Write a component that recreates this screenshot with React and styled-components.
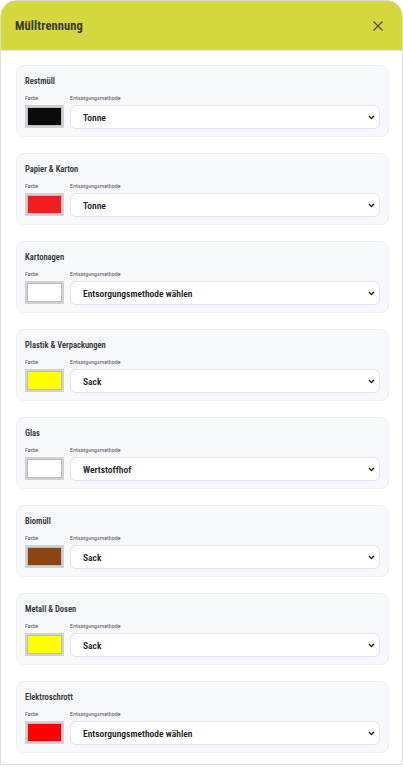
import React from "react";
import styled, { createGlobalStyle } from "styled-components";

const GlobalStyle = createGlobalStyle`
  html, body { margin: 0; padding: 0; background: #ffffff; }
  body { font-family: "Roboto Condensed", "Roboto", "Liberation Sans", sans-serif; font-stretch: condensed; }
  * { box-sizing: border-box; }
`;

const items = [
  { name: "Restmüll", color: "#0a0a0a", method: "Tonne" },
  { name: "Papier & Karton", color: "#f01e23", method: "Tonne" },
  { name: "Kartonagen", color: "#ffffff", method: "Entsorgungsmethode wählen" },
  { name: "Plastik & Verpackungen", color: "#ffff00", method: "Sack" },
  { name: "Glas", color: "#ffffff", method: "Wertstoffhof" },
  { name: "Biomüll", color: "#8b4513", method: "Sack" },
  { name: "Metall & Dosen", color: "#ffff00", method: "Sack" },
  { name: "Elektroschrott", color: "#ff0000", method: "Entsorgungsmethode wählen" },
];

const methods = ["Entsorgungsmethode wählen", "Tonne", "Sack", "Wertstoffhof"];

function App() {
  return (
    <>
      <GlobalStyle />
      <Modal>
        <Header>
          <Title>Mülltrennung</Title>
          <Close aria-label="Schließen">
            <svg width="12" height="12" viewBox="0 0 12 12">
              <path d="M1.5 1.5 L10.5 10.5 M10.5 1.5 L1.5 10.5" stroke="#4a4a3a" strokeWidth="1.1" fill="none" />
            </svg>
          </Close>
        </Header>
        <Body>
          {items.map((it) => (
            <Card key={it.name}>
              <CardTitle>{it.name}</CardTitle>
              <Row>
                <Field>
                  <Label>Farbe</Label>
                  <Swatch $color={it.color} />
                </Field>
                <Field $grow>
                  <Label>Entsorgungsmethode</Label>
                  <SelectBox>
                    <Select defaultValue={it.method}>
                      {methods.map((m) => (
                        <option key={m}>{m}</option>
                      ))}
                    </Select>
                    <Chevron width="7" height="5" viewBox="0 0 7 5">
                      <path d="M1 1 L3.5 3.5 L6 1" stroke="#222" strokeWidth="1.4" fill="none" />
                    </Chevron>
                  </SelectBox>
                </Field>
              </Row>
            </Card>
          ))}
        </Body>
      </Modal>
    </>
  );
}

export default App;

const Modal = styled.div`
  width: 403px;
  height: 765px;
  background: #ffffff;
  border: 1px solid #dcdcdc;
  border-radius: 16px 16px 0 0;
  overflow: hidden;
  display: flex;
  flex-direction: column;
`;

const Header = styled.div`
  height: 50px;
  flex-shrink: 0;
  background: #d4d83c;
  border-bottom: 1px solid #e6e8c8;
  display: flex;
  align-items: center;
  justify-content: space-between;
  padding: 0 17px 0 14px;
`;

const Title = styled.h1`
  margin: 0;
  font-size: 12.5px;
  font-weight: 700;
  color: #3a3a1c;
  letter-spacing: 0.1px;
`;

const Close = styled.button`
  border: 0;
  background: none;
  padding: 0;
  width: 14px;
  height: 14px;
  display: flex;
  align-items: center;
  justify-content: center;
  cursor: pointer;
`;

const Body = styled.div`
  padding: 14px 13px 0 15px;
  display: flex;
  flex-direction: column;
  gap: 16px;
`;

const Card = styled.div`
  background: #f7f8fc;
  border: 1px solid #eceef3;
  border-radius: 8px;
  padding: 10px 8px 7px 8px;
  height: 72px;
  flex-shrink: 0;
`;

const CardTitle = styled.div`
  font-size: 8.5px;
  font-weight: 600;
  color: #333333;
  margin-bottom: 8px;
  line-height: 10px;
`;

const Row = styled.div`
  display: flex;
  gap: 6px;
`;

const Field = styled.div`
  display: flex;
  flex-direction: column;
  flex: ${(p) => (p.$grow ? 1 : "none")};
`;

const Label = styled.div`
  font-size: 6px;
  color: #555;
  line-height: 8px;
  margin-bottom: 3px;
`;

const Swatch = styled.div`
  width: 39px;
  height: 23px;
  border: 2px solid #d2d2d2;
  background: ${(p) => p.$color};
  box-shadow: inset 0 0 0 1px #bdbdbd;
`;

const SelectBox = styled.div`
  position: relative;
  height: 24px;
`;

const Select = styled.select`
  appearance: none;
  width: 100%;
  height: 24px;
  border: 1px solid #e2e4ea;
  border-radius: 6px;
  background: #ffffff;
  padding: 0 20px 0 12px;
  font-family: inherit;
  font-stretch: condensed;
  font-size: 9.5px;
  font-weight: 600;
  color: #1e1e1e;
  outline: none;
`;

const Chevron = styled.svg`
  position: absolute;
  right: 5px;
  top: 10px;
  pointer-events: none;
`;
